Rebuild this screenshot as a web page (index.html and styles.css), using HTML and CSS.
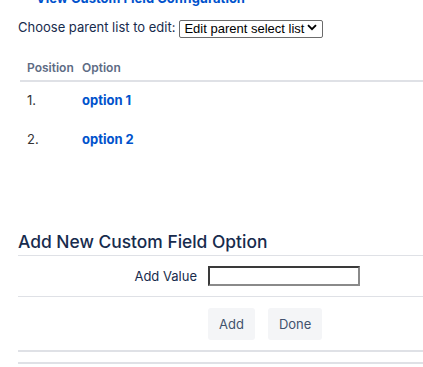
FILE: index.html
```html
<!DOCTYPE html>
<html>
<head>
<meta charset="utf-8">
<link rel="stylesheet" href="styles.css">
</head>
<body>
<div class="page">
  <a class="cfg-link" href="#">View Custom Field Configuration</a>
  <div class="choose">
    <span class="choose-label">Choose parent list to edit:</span>
    <span class="select-wrap">
      <select class="parent-select"><option>Edit parent select list</option></select>
      <svg class="chev" width="10" height="7" viewBox="0 0 10 7"><path d="M1 1.2 L5 5.2 L9 1.2" fill="none" stroke="#000" stroke-width="1.9"/></svg>
    </span>
  </div>
  <table class="options">
    <thead>
      <tr><th class="col-pos">Position</th><th>Option</th></tr>
    </thead>
    <tbody>
      <tr><td>1.</td><td><a class="opt" href="#">option 1</a></td></tr>
      <tr><td>2.</td><td><a class="opt" href="#">option 2</a></td></tr>
    </tbody>
  </table>
  <h3 class="section-title">Add New Custom Field Option</h3>
  <div class="form-row">
    <label class="field-label">Add Value</label>
    <input class="field-input" type="text">
  </div>
  <div class="button-row">
    <div></div>
    <div class="buttons">
      <button class="btn">Add</button>
      <button class="btn">Done</button>
    </div>
  </div>
  <div class="footer-line"></div>
</div>
</body>
</html>
```
FILE: styles.css
```css
html, body {
  margin: 0;
  padding: 0;
  background: #fff;
}
body {
  font-family: Inter, "Noto Sans", sans-serif;
  font-size: 13px;
  line-height: 20px;
  color: #172B4D;
  overflow: hidden;
}
.page {
  padding-left: 18px;
}
.cfg-link {
  display: block;
  margin-top: -12px;
  padding-left: 18px;
  font-weight: 700;
  color: #0052CC;
  text-decoration: none;
  height: 20px;
}
.choose {
  display: flex;
  align-items: center;
  margin-top: 10px;
  height: 18px;
}
.choose-label {
  margin-right: 4px;
}
.select-wrap {
  position: relative;
  display: inline-block;
  height: 18px;
}
.parent-select {
  appearance: none;
  -webkit-appearance: none;
  box-sizing: border-box;
  width: 144px;
  height: 18px;
  margin: 0;
  padding: 0 0 0 4px;
  border: 1px solid #6b6b6b;
  border-radius: 2px;
  background: #fff;
  font-family: "Liberation Sans", Arial, sans-serif;
  font-size: 13px;
  line-height: 16px;
  color: #000;
}
.chev {
  position: absolute;
  right: 6px;
  top: 6px;
  pointer-events: none;
}
.options {
  margin-top: 20px;
  margin-left: 2px;
  width: 403px;
  border-collapse: collapse;
  table-layout: fixed;
}
.options th {
  text-align: left;
  font-size: 12px;
  line-height: 16px;
  font-weight: 600;
  color: #5E6C84;
  padding: 4px 7px 4px 7px;
  border-bottom: 2px solid #DFE1E6;
}
.options th.col-pos {
  width: 41px;
}
.options td {
  padding: 8px 7px 11px 7px;
  color: #333;
  line-height: 20px;
}
.opt {
  color: #0052CC;
  font-weight: 700;
  text-decoration: none;
}
.section-title {
  margin: 70px 0 0 0;
  padding-bottom: 1px;
  font-size: 17.4px;
  line-height: 24px;
  font-weight: 500;
  color: #172B4D;
  border-bottom: 1px solid #DFE1E6;
}
.form-row, .button-row {
  display: grid;
  grid-template-columns: 190px 1fr;
  align-items: center;
}
.form-row {
  padding: 10px 0 10px 0;
  border-bottom: 1px solid #DFE1E6;
}
.field-label {
  text-align: right;
  padding-right: 11px;
  line-height: 20px;
}
.field-input {
  box-sizing: border-box;
  width: 152px;
  height: 20px;
  margin: 0;
  padding: 0 2px;
  border-style: solid;
  border-width: 2px;
  border-color: #3a3a3a #8a8a8a #8a8a8a #3a3a3a;
  background: #fff;
}
.button-row {
  padding: 11px 0 10px 0;
  border-bottom: 2px solid #DFE1E6;
}
.buttons {
  display: flex;
  gap: 13px;
}
.btn {
  height: 32px;
  padding: 0 11px;
  border: none;
  border-radius: 3px;
  background: #F4F5F7;
  font-family: Inter, "Noto Sans", sans-serif;
  font-size: 13px;
  color: #42526E;
}
.footer-line {
  margin-top: 10px;
  height: 2px;
  background: #DFE1E6;
}
```
